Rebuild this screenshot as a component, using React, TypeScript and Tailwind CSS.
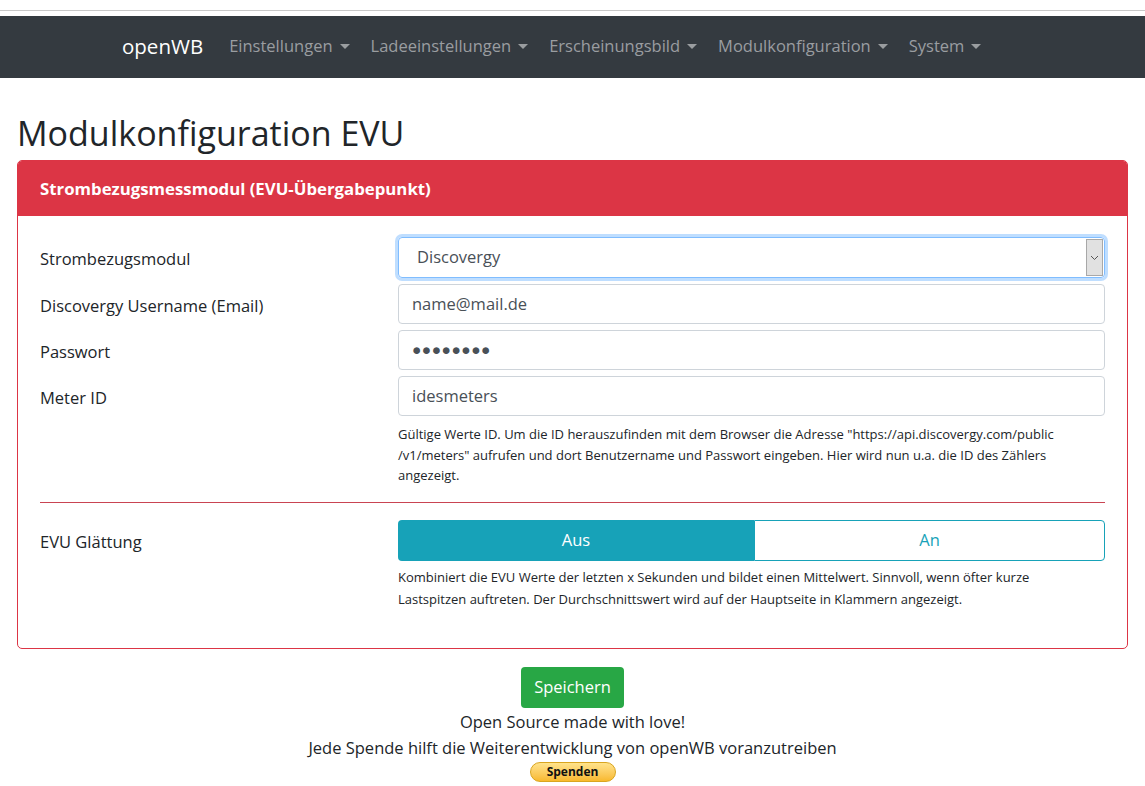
import React from "react";

const font = { fontFamily: '"Open Sans", "Noto Sans", sans-serif' };

function Caret() {
  return <span className="ml-[7px] inline-block h-0 w-0 border-l-[5px] border-r-[5px] border-t-[5px] border-l-transparent border-r-transparent border-t-current align-middle" />;
}

export default function App() {
  const navItems = ["Einstellungen", "Ladeeinstellungen", "Erscheinungsbild", "Modulkonfiguration", "System"];
  return (
    <div className="min-h-[786px] bg-white text-[#212529]" style={font}>
      <div className="h-[10px] bg-white" />
      <div className="h-[1px] bg-[#c8c8c8]" />
      <div className="h-[5px] bg-white" />
      <nav className="flex h-[62px] items-center bg-[#343a40] pb-[2px] pl-[122px]">
        <span className="mr-[26px] text-[20.5px] text-white">openWB</span>
        <div className="flex gap-[21px]">
          {navItems.map((n) => (
            <span key={n} className="flex items-center text-[16.5px] text-[#9a9da0]">
              {n}
              <Caret />
            </span>
          ))}
        </div>
      </nav>
      <div className="px-[17px]">
        <h1 className="mt-[34px] mb-[6px] text-[34px] leading-[42px] text-[#212529]">Modulkonfiguration EVU</h1>
        <div className="rounded-[5px] border border-[#dc3545]">
          <div className="flex h-[55px] items-center rounded-t-[4px] bg-[#dc3545] px-[22px] text-[16.8px] font-bold text-white">
            Strombezugsmessmodul (EVU-Übergabepunkt)
          </div>
          <div className="px-[22px] pt-[21px] pb-[38px]">
            <div className="flex flex-col gap-[6px]">
              <Row label="Strombezugsmodul">
                <div className="flex h-[41px] items-center justify-between rounded-[4px] border border-[#80bdff] pl-[18px] pr-[1px] shadow-[0_0_0_3px_rgba(0,123,255,0.25)]">
                  <span className="text-[16.5px] text-[#495057]">Discovergy</span>
                  <span className="flex h-[37px] w-[17px] items-center justify-center border border-[#a8a8a8] bg-[#e1e1e1]">
                    <svg width="9" height="6" viewBox="0 0 9 6"><path d="M1 1l3.5 3.5L8 1" stroke="#555" fill="none" strokeWidth="1" /></svg>
                  </span>
                </div>
              </Row>
              <Row label="Discovergy Username (Email)">
                <Input value="name@mail.de" />
              </Row>
              <Row label="Passwort">
                <Input value="●●●●●●●●" pw />
              </Row>
              <Row label="Meter ID">
                <Input value="idesmeters" />
                <p className="mt-[8px] text-[13px] leading-[20.5px] text-[#212529]">
                  Gültige Werte ID. Um die ID herauszufinden mit dem Browser die Adresse "https://api.discovergy.com/public
                  <br />/v1/meters" aufrufen und dort Benutzername und Passwort eingeben. Hier wird nun u.a. die ID des Zählers
                  <br />angezeigt.
                </p>
              </Row>
            </div>
            <div className="mt-[16px] mb-[17px] h-[1px] bg-[#c94452]" />
            <Row label="EVU Glättung">
              <div className="flex h-[41px]">
                <div className="flex w-[356px] items-center justify-center rounded-l-[4px] bg-[#17a2b8] text-[16.5px] text-white">Aus</div>
                <div className="flex flex-1 items-center justify-center rounded-r-[4px] border border-[#17a2b8] text-[16.5px] text-[#17a2b8]">An</div>
              </div>
              <p className="mt-[5px] text-[13px] leading-[22px] text-[#212529]">
                Kombiniert die EVU Werte der letzten x Sekunden und bildet einen Mittelwert. Sinnvoll, wenn öfter kurze
                <br />Lastspitzen auftreten. Der Durchschnittswert wird auf der Hauptseite in Klammern angezeigt.
              </p>
            </Row>
          </div>
        </div>
        <div className="flex flex-col items-center">
          <div className="mt-[18px] flex h-[41px] w-[103px] items-center justify-center rounded-[4px] bg-[#28a745] text-[16.5px] text-white">Speichern</div>
          <div className="mt-[1px] text-[16.5px] leading-[26px]">Open Source made with love!</div>
          <div className="text-[16.5px] leading-[26px]">Jede Spende hilft die Weiterentwicklung von openWB voranzutreiben</div>
          <div className="mt-[1px] flex h-[20px] w-[86px] items-center justify-center rounded-full border border-[#d9a520] bg-gradient-to-b from-[#ffe38a] to-[#f8b92b] text-[12px] font-bold text-[#111]">Spenden</div>
        </div>
      </div>
    </div>
  );
}

function Row({ label, children }: { label: string; children: React.ReactNode }) {
  return (
    <div className="flex">
      <div className="w-[358px] shrink-0 pt-[9px] text-[16.5px] leading-[25px]">{label}</div>
      <div className="flex-1">{children}</div>
    </div>
  );
}

function Input({ value, pw }: { value: string; pw?: boolean }) {
  return (
    <div className="flex h-[40px] items-center rounded-[4px] border border-[#ced4da] px-[13px]">
      <span className={pw ? "text-[15.5px] tracking-[0.5px] text-[#495057]" : "text-[16.5px] text-[#495057]"}>{value}</span>
    </div>
  );
}
